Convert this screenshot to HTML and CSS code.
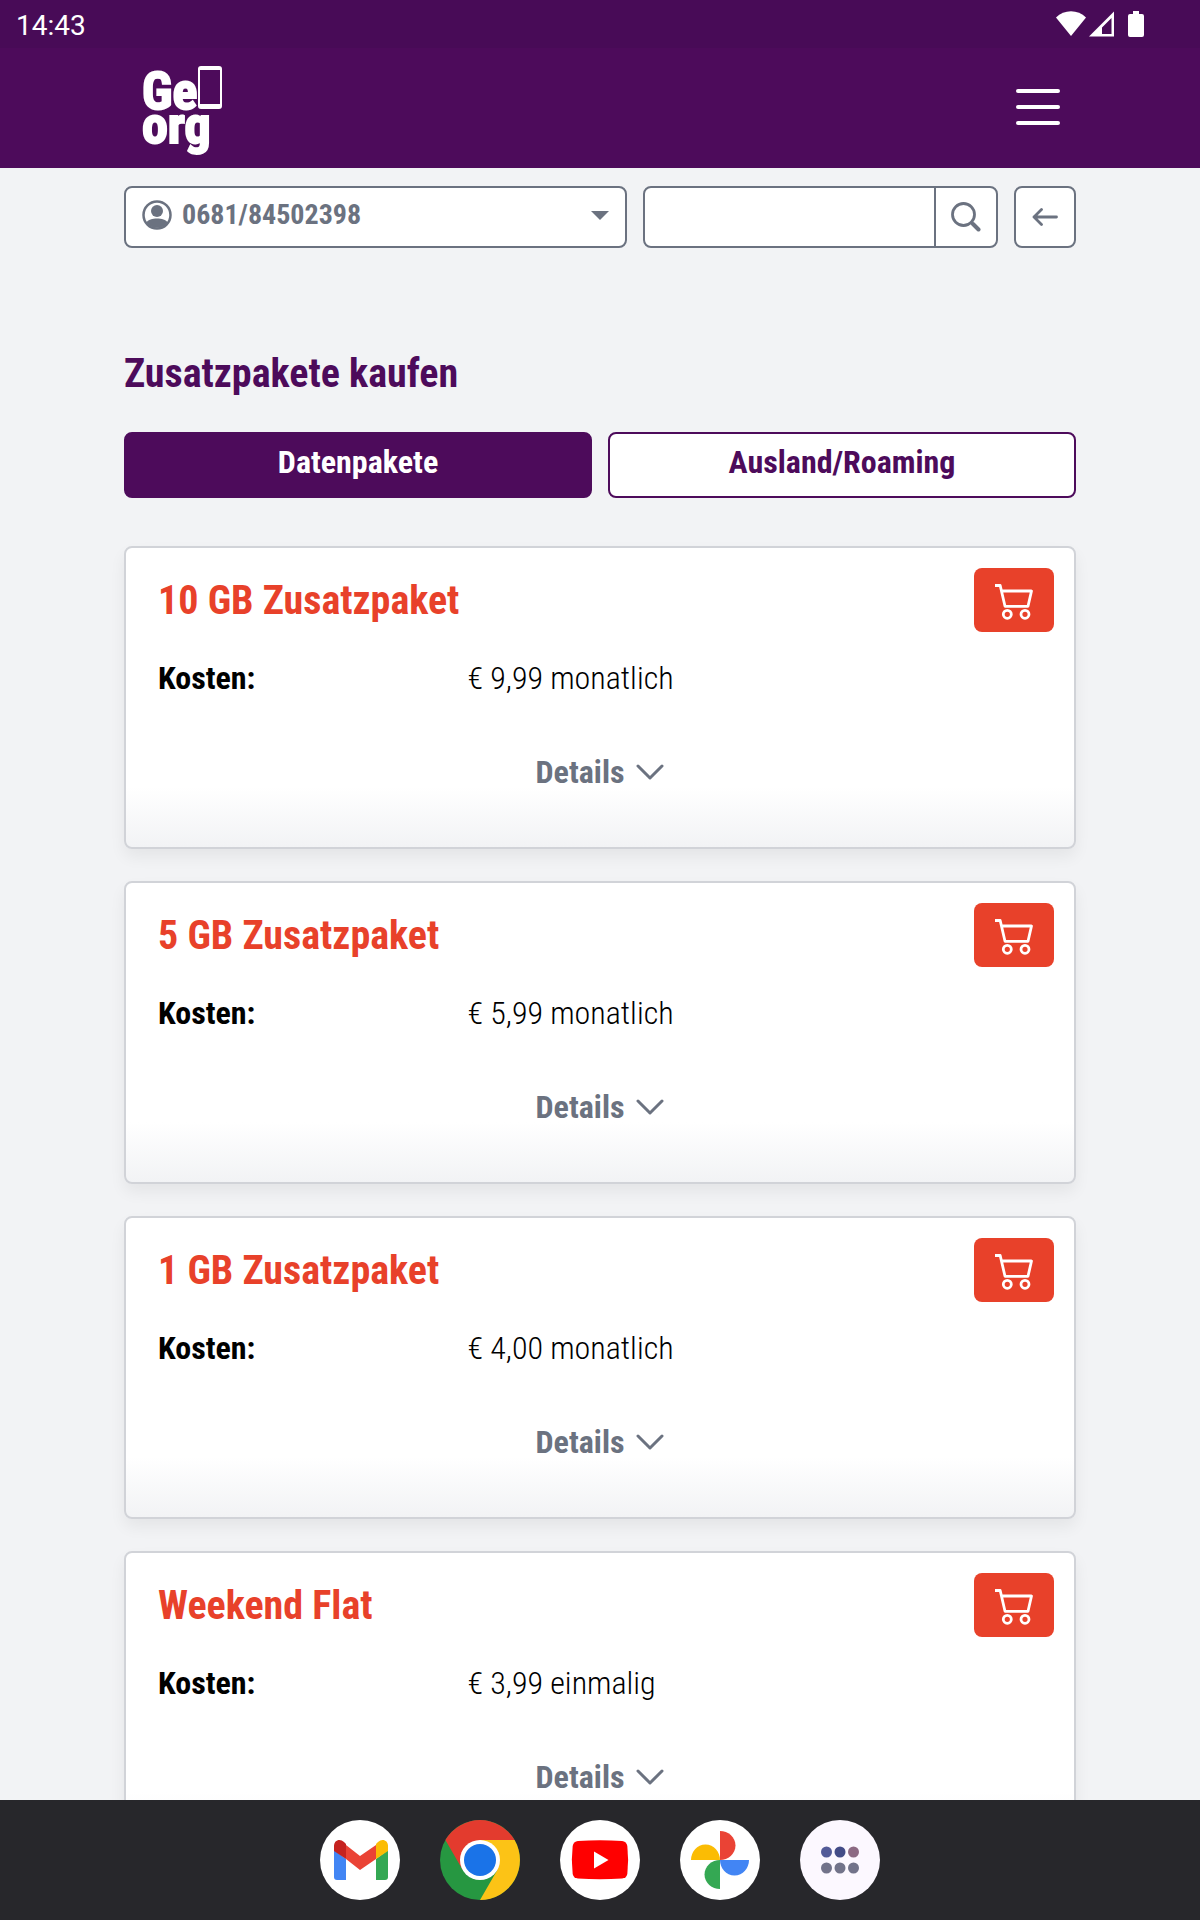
FILE: index.html
```html
<!DOCTYPE html>
<html lang="de">
<head>
  <meta charset="UTF-8" />
  <meta name="viewport" content="width=device-width, initial-scale=1.0" />
  <title>Georg - Zusatzpakete kaufen</title>
  <link rel="stylesheet" href="styles.css">
</head>
<body>
  <!-- shared icons -->
  <svg class="sprite" aria-hidden="true">
    <symbol id="icon-cart" viewBox="0 0 38 36">
      <g fill="none" stroke="currentColor" stroke-width="2.8" stroke-linejoin="round">
        <path d="M0 1.5h5.2L10 22.3h23L36.500 7H6.500"/>
        <circle cx="12.3" cy="30.3" r="4"/>
        <circle cx="30" cy="30.3" r="4"/>
      </g>
    </symbol>
    <symbol id="icon-chevron" viewBox="0 0 28 16">
      <path d="M2 2l12 12L26 2" fill="none" stroke="currentColor" stroke-width="3" stroke-linecap="round" stroke-linejoin="round"/>
    </symbol>
  </svg>

  <div class="status-bar">
    <span class="time">14:43</span>
    <svg class="status-icons" viewBox="0 0 88 28" fill="#fff" aria-hidden="true">
      <path d="M0 7.5C8-.8 22-.8 30 7.500L15 26z"/>
      <path fill-rule="evenodd" d="M33 26.500L58 1.500v25zM46 24h9.500V8L46 17.500z"/>
      <path d="M77 1h6v3h3a2 2 0 0 1 2 2v19a2 2 0 0 1-2 2H74a2 2 0 0 1-2-2V6a2 2 0 0 1 2-2h3z"/>
    </svg>
  </div>

  <header class="site-header">
    <div class="container header-inner">
      <a class="logo" href="#" aria-label="Georg">
        <span class="logo-line">Ge<span class="logo-phone"></span></span>
        <span class="logo-line">org</span>
      </a>
      <button class="menu-btn" type="button" aria-label="Menü">
        <span></span><span></span><span></span>
      </button>
    </div>
  </header>

  <main class="page">
    <div class="container">
      <div class="toolbar">
        <label class="number-select">
          <svg class="user-icon" viewBox="0 0 30 30" aria-hidden="true">
            <circle cx="15" cy="15" r="13.500" fill="none" stroke="currentColor" stroke-width="2.500"/>
            <circle cx="15" cy="11" r="6" fill="currentColor"/>
            <path d="M4 22.500C8 17 22 17 26 22.500A14 14 0 0 1 4 22.500z" fill="currentColor"/>
          </svg>
          <select aria-label="Rufnummer">
            <option>0681/84502398</option>
          </select>
          <svg class="caret" viewBox="0 0 18 9" aria-hidden="true"><path d="M0 0h18L9 9z" fill="currentColor"/></svg>
        </label>
        <form class="search">
          <input type="search" aria-label="Suche" />
          <button type="button" aria-label="Suchen">
            <svg viewBox="0 0 30 30" aria-hidden="true">
              <g fill="none" stroke="currentColor" stroke-linecap="round">
                <circle cx="12.500" cy="12.500" r="11" stroke-width="2.800"/>
                <path d="M20.500 20.500l1 1" stroke-width="3"/>
                <path d="M22 22l5.500 5.500" stroke-width="4"/>
              </g>
            </svg>
          </button>
        </form>
        <button class="back-btn" type="button" aria-label="Zurück">
          <svg viewBox="0 0 26 18" aria-hidden="true">
            <path d="M9.500 1.500L2 9l7.500 7.500M2 9h22.500" fill="none" stroke="currentColor" stroke-width="2.800" stroke-linecap="round" stroke-linejoin="round"/>
          </svg>
        </button>
      </div>

      <h1>Zusatzpakete kaufen</h1>

      <div class="tabs">
        <button class="tab active" type="button">Datenpakete</button>
        <button class="tab" type="button">Ausland/Roaming</button>
      </div>

      <section class="card">
        <div class="card-head">
          <h2>10 GB Zusatzpaket</h2>
          <button class="cart-btn" type="button" aria-label="10 GB Zusatzpaket kaufen"><svg><use href="#icon-cart"/></svg></button>
        </div>
        <dl class="costs"><dt>Kosten:</dt><dd>€ 9,99 monatlich</dd></dl>
        <button class="details-btn" type="button">Details <svg><use href="#icon-chevron"/></svg></button>
      </section>

      <section class="card">
        <div class="card-head">
          <h2>5 GB Zusatzpaket</h2>
          <button class="cart-btn" type="button" aria-label="5 GB Zusatzpaket kaufen"><svg><use href="#icon-cart"/></svg></button>
        </div>
        <dl class="costs"><dt>Kosten:</dt><dd>€ 5,99 monatlich</dd></dl>
        <button class="details-btn" type="button">Details <svg><use href="#icon-chevron"/></svg></button>
      </section>

      <section class="card">
        <div class="card-head">
          <h2>1 GB Zusatzpaket</h2>
          <button class="cart-btn" type="button" aria-label="1 GB Zusatzpaket kaufen"><svg><use href="#icon-cart"/></svg></button>
        </div>
        <dl class="costs"><dt>Kosten:</dt><dd>€ 4,00 monatlich</dd></dl>
        <button class="details-btn" type="button">Details <svg><use href="#icon-chevron"/></svg></button>
      </section>

      <section class="card">
        <div class="card-head">
          <h2>Weekend Flat</h2>
          <button class="cart-btn" type="button" aria-label="Weekend Flat kaufen"><svg><use href="#icon-cart"/></svg></button>
        </div>
        <dl class="costs"><dt>Kosten:</dt><dd>€ 3,99 einmalig</dd></dl>
        <button class="details-btn" type="button">Details <svg><use href="#icon-chevron"/></svg></button>
      </section>
    </div>
  </main>

  <nav class="dock">
    <a href="#" aria-label="Gmail">
      <svg viewBox="0 0 80 80">
        <circle cx="40" cy="40" r="40" fill="#fff"/>
        <path d="M14 30l12 9v21h-9a3 3 0 0 1-3-3z" fill="#4285f4"/>
        <path d="M56 39l12-9v27a3 3 0 0 1-3 3h-9z" fill="#34a853"/>
        <path d="M26 25l14 11 16-11v14L40 50 26 39z" fill="#ea4335"/>
        <path d="M14 31v-5c0-6 6-8 10-4l2 2v15z" fill="#c5221f"/>
        <path d="M68 31v-5c0-6-6-8-10-4l-2 2v15z" fill="#fbbc04"/>
      </svg>
    </a>
    <a href="#" aria-label="Chrome">
      <svg viewBox="0 0 80 80">
        <circle cx="40" cy="40" r="40" fill="#269741"/>
        <path d="M5.400 20A40 40 0 0 1 74.600 20H40L22.700 50z" fill="#e33b2e"/>
        <path d="M74.600 20A40 40 0 0 1 40 80L57.300 50 40 20z" fill="#fcc316"/>
        <circle cx="40" cy="40" r="20" fill="#fff"/>
        <circle cx="40" cy="40" r="16" fill="#1a73e8"/>
      </svg>
    </a>
    <a href="#" aria-label="YouTube">
      <svg viewBox="0 0 80 80">
        <circle cx="40" cy="40" r="40" fill="#fff"/>
        <path d="M18 21Q40 19.500 62 21Q66.500 21.500 67.300 26Q69 40 67.300 54Q66.500 58 62 58.500Q40 60 18 58.500Q13.500 58 12.700 54Q11 40 12.700 26Q13.500 21.500 18 21z" fill="#f00"/>
        <path d="M34 31.500L48.500 40 34 48.500z" fill="#fff"/>
      </svg>
    </a>
    <a href="#" aria-label="Fotos">
      <svg viewBox="0 0 80 80">
        <circle cx="40" cy="40" r="40" fill="#fff"/>
        <path d="M40 11c8 0 15.500 6 15.500 14.500S48 40 40 40z" fill="#ea4335"/>
        <path d="M69 40c0 8-6 15.500-14.500 15.500S40 48 40 40z" fill="#4285f4"/>
        <path d="M40 69c-8 0-15.500-6-15.500-14.500S32 40 40 40z" fill="#34a853"/>
        <path d="M11 40c0-8 6-15.500 14.500-15.500S40 32 40 40z" fill="#fbbc04"/>
      </svg>
    </a>
    <a href="#" aria-label="Alle Apps">
      <svg viewBox="0 0 80 80">
        <circle cx="40" cy="40" r="40" fill="#fcf8ff"/>
        <circle cx="26.500" cy="32" r="5.500" fill="#535b98"/>
        <circle cx="40" cy="32" r="5.500" fill="#434c87"/>
        <circle cx="53.500" cy="32" r="5.500" fill="#8c6a83"/>
        <g fill="#72738a">
          <circle cx="26.500" cy="48" r="5.500"/>
          <circle cx="40" cy="48" r="5.500"/>
          <circle cx="53.500" cy="48" r="5.500"/>
        </g>
      </svg>
    </a>
  </nav>
</body>
</html>
```
FILE: styles.css
```css
:root {
  --purple: #4d0b5b;
  --purple-dark: #480b57;
  --orange: #e8412a;
  --gray: #6b7280;
  --bg: #f2f3f5;
  --border: #d1d3d8;
}
* {
  box-sizing: border-box;
}
body {
  margin: 0;
  height: 100vh;
  display: flex;
  flex-direction: column;
  overflow: hidden;
  background: var(--bg);
  color: #000;
  font-family: "Liberation Sans Narrow", "Roboto Condensed", "Liberation Sans", sans-serif;
  font-size: 32px;
  line-height: 40px;
}
button, input, select {
  font: inherit;
  color: inherit;
  margin: 0;
  padding: 0;
  border: none;
  background: none;
}
button {
  cursor: pointer;
}
svg {
  display: block;
}
.sprite {
  position: absolute;
  width: 0;
  height: 0;
}
.container {
  width: 100%;
  max-width: 984px;
  margin: 0 auto;
  padding: 0 16px;
}

/* top bars */
.status-bar {
  flex: none;
  display: flex;
  align-items: center;
  justify-content: space-between;
  height: 48px;
  padding: 0 56px 0 16px;
  background: var(--purple-dark);
  color: #fff;
  font-family: Roboto, sans-serif;
  font-size: 28px;
}
.time {
  padding-top: 3px;
}
.status-icons {
  width: 88px;
  height: 28px;
}
.site-header {
  flex: none;
  background: var(--purple);
  color: #fff;
}
.header-inner {
  display: flex;
  align-items: center;
  justify-content: space-between;
  height: 120px;
  padding-bottom: 2px;
}
.logo {
  margin: 0 0 6px 18px;
  color: inherit;
  text-decoration: none;
  font-size: 52px;
  font-weight: bold;
  line-height: 34px;
  -webkit-text-stroke: 2px #fff;
}
.logo-line {
  display: flex;
  align-items: flex-end;
}
.logo-phone {
  width: 24px;
  height: 43px;
  margin-left: 1px;
  border: 2px solid #fff;
  border-top-width: 4px;
  border-bottom-width: 5px;
  border-radius: 3px;
}
.menu-btn {
  display: flex;
  flex-direction: column;
  gap: 12px;
  width: 44px;
  margin-right: 16px;
}
.menu-btn span {
  width: 100%;
  height: 4px;
  border-radius: 2px;
  background: #fff;
}

/* content */
.page {
  flex: 1;
  min-height: 0;
  overflow: hidden;
  padding-top: 18px;
}
.toolbar {
  display: grid;
  grid-template-columns: 58fr 41fr 62px;
  gap: 16px;
  color: var(--gray);
}
.number-select, .search, .back-btn {
  min-width: 0;
  height: 62px;
  border: 2px solid var(--gray);
  border-radius: 8px;
  background: #fff;
}
.number-select {
  display: flex;
  align-items: center;
  padding: 0 16px 4px;
}
.number-select select {
  flex: 1;
  min-width: 0;
  margin-left: 10px;
  appearance: none;
  font-size: 28px;
  font-weight: bold;
  outline: none;
}
.user-icon {
  width: 30px;
  height: 30px;
}
.caret {
  width: 18px;
  height: 9px;
  pointer-events: none;
}
.search {
  display: flex;
}
.search input {
  flex: 1;
  min-width: 0;
  padding: 0 16px;
  outline: none;
}
.search button {
  width: 62px;
  border-left: 2px solid var(--gray);
}
.search svg {
  width: 30px;
  height: 30px;
  margin: 0 auto;
}
.back-btn svg {
  width: 26px;
  height: 18px;
  margin: 0 auto;
}
h1, h2 {
  margin: 0;
  font-size: 40px;
  line-height: 48px;
}
h1 {
  margin-top: 102px;
  color: var(--purple);
}
.tabs {
  display: grid;
  grid-template-columns: 1fr 1fr;
  gap: 16px;
  margin: 34px 0 48px;
}
.tab {
  height: 66px;
  padding-bottom: 6px;
  border: 2px solid var(--purple);
  border-radius: 8px;
  background: #fff;
  color: var(--purple);
  font-weight: bold;
}
.tab.active {
  background: var(--purple);
  color: #fff;
}
.card {
  margin-bottom: 32px;
  padding: 20px 32px 55px;
  border: 2px solid var(--border);
  border-radius: 8px;
  background: linear-gradient(#fff, #fff calc(100% - 60px), var(--bg));
  box-shadow: 0 8px 16px rgba(0, 0, 0, 0.06);
}
.card-head {
  display: flex;
  justify-content: space-between;
  align-items: center;
  margin-right: -12px;
}
.card h2 {
  padding-top: 2px;
  color: var(--orange);
}
.cart-btn {
  width: 80px;
  height: 64px;
  border-radius: 8px;
  background: var(--orange);
  color: #fff;
}
.cart-btn svg {
  width: 38px;
  height: 36px;
  margin: 4px auto 0;
}
.costs {
  display: grid;
  grid-template-columns: 35% 1fr;
  margin: 26px 0 54px;
}
.costs dt {
  font-weight: bold;
}
.costs dd {
  margin: 0;
  font-weight: 300;
}
.details-btn {
  display: flex;
  align-items: center;
  gap: 12px;
  margin: 0 auto;
  color: var(--gray);
  font-weight: bold;
}
.details-btn svg {
  width: 28px;
  height: 16px;
}

/* app dock */
.dock {
  flex: none;
  display: flex;
  align-items: center;
  justify-content: center;
  gap: 40px;
  height: 120px;
  background: #27272b;
}
.dock svg {
  width: 80px;
  height: 80px;
}
```
